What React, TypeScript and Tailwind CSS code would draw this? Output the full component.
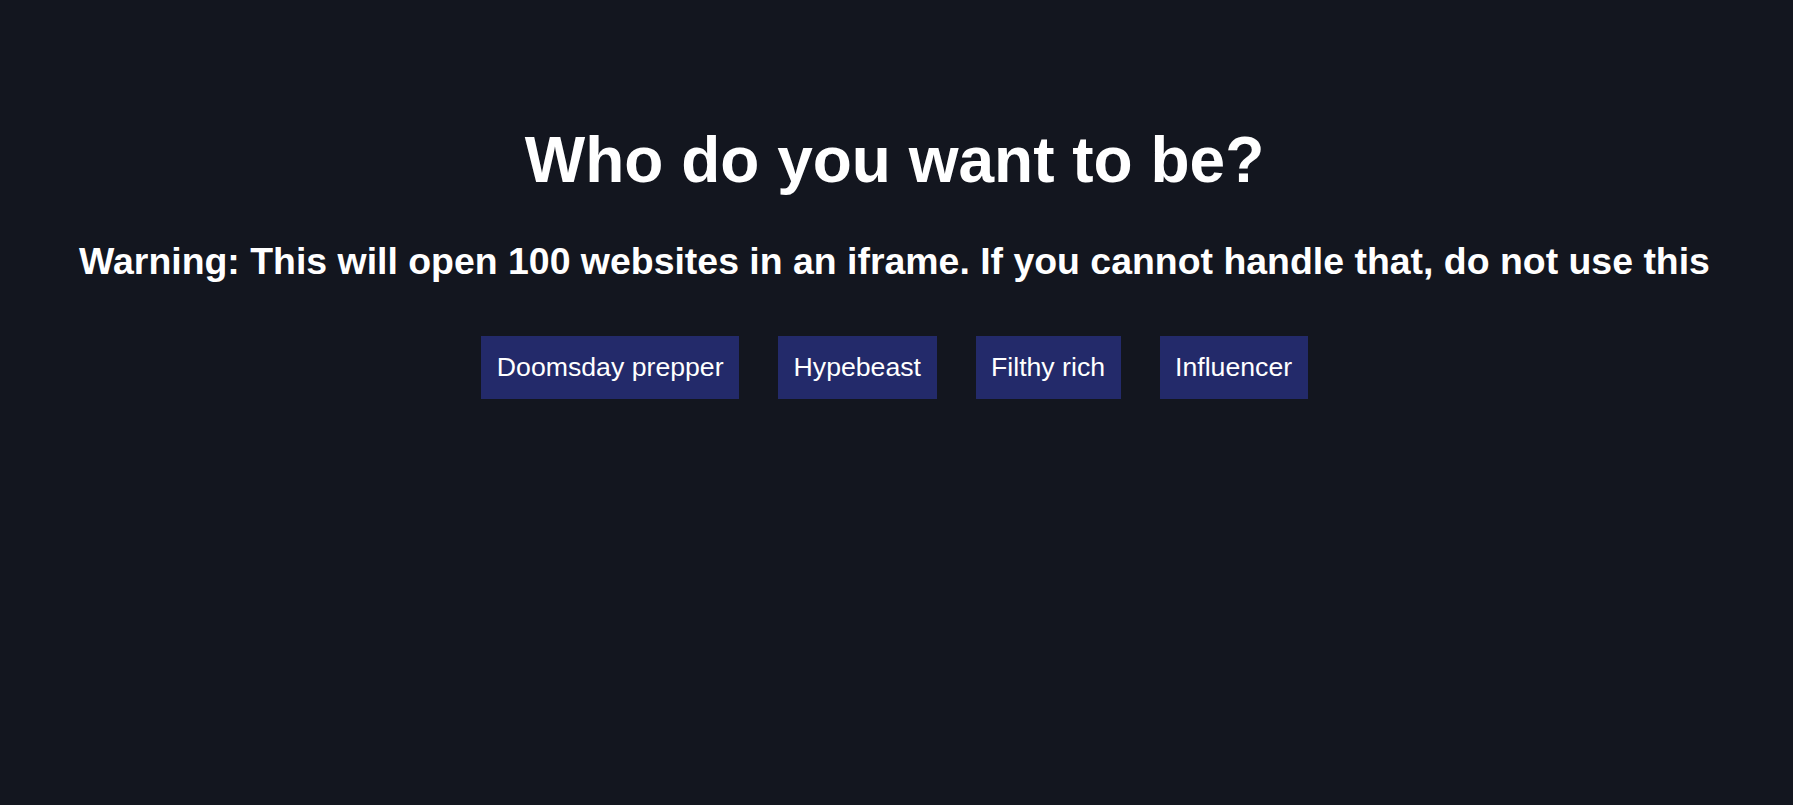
import React, { FC } from "react";

const roles = ["Doomsday prepper", "Hypebeast", "Filthy rich", "Influencer"];

const RoleButton: FC<{ label: string }> = ({ label }) => (
  <button className="bg-[#232a6a] text-white text-[26.67px] leading-[31px] px-[15.5px] py-[16px] cursor-pointer">
    {label}
  </button>
);

const App: FC = () => {
  return (
    <div
      className="min-h-screen w-full bg-[#13161f] text-white flex flex-col items-center pt-[123px] pr-[4px]"
      style={{ fontFamily: '"Liberation Sans", Arial, sans-serif' }}
    >
      <h1 className="text-[64px] leading-[74px] font-bold">Who do you want to be?</h1>
      <h3 className="mt-[43px] text-[37.44px] leading-[43px] font-bold">
        Warning: This will open 100 websites in an iframe. If you cannot handle that, do not use this
      </h3>
      <div className="mt-[53px] flex gap-[39px]">
        {roles.map((r) => (
          <RoleButton key={r} label={r} />
        ))}
      </div>
    </div>
  );
};

export default App;
